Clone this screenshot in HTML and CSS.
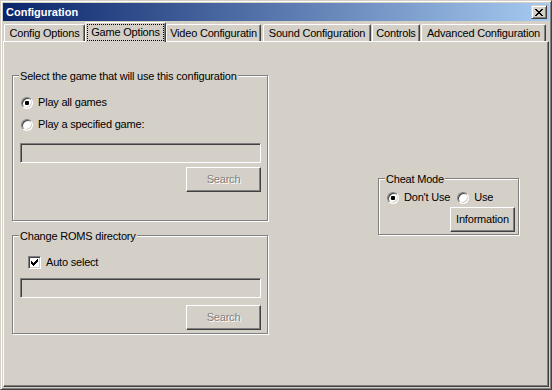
FILE: index.html
```html
<!DOCTYPE html>
<html>
  <head>
    <title>Configuration</title>
    <link rel="stylesheet" href="styles.css">
  </head>
  <body>
    <div class="window">
      <div class="titlebar">
        <span class="title">Configuration</span>
        <div class="close-btn">
          <svg width="8" height="7" viewBox="0 0 8 7" shape-rendering="crispEdges">
            <path d="M0 0h2v1H0z M6 0h2v1H6z M1 1h2v1H1z M5 1h2v1H5z M2 2h4v1H2z M3 3h2v1H3z M2 4h4v1H2z M1 5h2v1H1z M5 5h2v1H5z M0 6h2v1H0z M6 6h2v1H6z" fill="#000"/>
          </svg>
        </div>
      </div>
      <div class="tabs">
        <div class="tab tab-config">Config Options</div>
        <div class="tab tab-game active"><span class="focus">Game Options</span></div>
        <div class="tab tab-video">Video Configuratin</div>
        <div class="tab tab-sound">Sound Configuration</div>
        <div class="tab tab-controls">Controls</div>
        <div class="tab tab-advanced">Advanced Configuration</div>
      </div>
      <div class="panel">
        <div class="left-col">
          <div class="group game-group">
            <div class="legend">Select the game that will use this configuration</div>
            <div class="option opt-all"><span class="radio checked"></span>Play all games</div>
            <div class="option opt-one"><span class="radio"></span>Play a specified game:</div>
            <div class="textbox game-path"></div>
            <div class="button disabled search">Search</div>
          </div>
          <div class="group roms-group">
            <div class="legend">Change ROMS directory</div>
            <div class="option check-row">
              <span class="checkbox">
                <svg width="7" height="7" viewBox="0 0 7 7" shape-rendering="crispEdges">
                  <path d="M6 0h1v1H6z M5 1h2v1H5z M0 2h1v1H0z M4 2h3v1H4z M0 3h2v1H0z M3 3h3v1H3z M0 4h5v1H0z M1 5h3v1H1z M2 6h1v1H2z" fill="#000"/>
                </svg>
              </span>Auto select
            </div>
            <div class="textbox roms-path"></div>
            <div class="button disabled search">Search</div>
          </div>
        </div>
        <div class="group cheat-group">
          <div class="legend">Cheat Mode</div>
          <div class="cheat-options">
            <div class="option"><span class="radio checked"></span>Don't Use</div>
            <div class="option opt-use"><span class="radio"></span>Use</div>
          </div>
          <div class="button info">Information</div>
        </div>
      </div>
    </div>
  </body>
</html>
```

FILE: styles.css
```css
* {
  box-sizing: border-box;
}
body {
  margin: 0;
  background: #d4d0c8;
  font-family: "Liberation Sans", Arial, sans-serif;
  font-size: 11px;
  line-height: 13px;
  letter-spacing: -0.2px;
  color: #000;
}

/* window frame */
.window {
  width: 552px;
  height: 390px;
  padding: 2px;
  background: #d4d0c8;
  border: 1px solid;
  border-color: #d4d0c8 #404040 #404040 #d4d0c8;
  box-shadow: inset 1px 1px 0 #fff, inset -1px -1px 0 #808080;
  display: flex;
  flex-direction: column;
}
.titlebar {
  height: 18px;
  margin-bottom: 1px;
  padding: 1px 2px 0 3px;
  display: flex;
  align-items: flex-start;
  background: linear-gradient(to right, #0a246a, #a6caf0);
}
.title {
  flex: 1;
  color: #fff;
  font-weight: bold;
  line-height: 17px;
  letter-spacing: 0;
}
.close-btn {
  width: 16px;
  height: 14px;
  margin-top: 1px;
  padding: 3px 0 0 3px;
  background: #d4d0c8;
  border: 1px solid;
  border-color: #d4d0c8 #404040 #404040 #d4d0c8;
  box-shadow: inset 1px 1px 0 #fff, inset -1px -1px 0 #808080;
}
.close-btn svg {
  display: block;
}

/* tab strip */
.tabs {
  height: 19px;
  padding-left: 1px;
  display: flex;
  align-items: flex-end;
  position: relative;
  z-index: 1;
}
.tab {
  height: 17px;
  padding-top: 2px;
  text-align: center;
  white-space: nowrap;
  background: #d4d0c8;
  border-top: 1px solid #fff;
  border-left: 1px solid #fff;
  border-right: 1px solid #404040;
  border-radius: 2px 2px 0 0;
  box-shadow: inset -1px 0 0 #808080;
}
.tab.active {
  height: 20px;
  margin-bottom: -1px;
  padding: 1px 1px 0 1px;
}
.focus {
  display: block;
  height: 17px;
  padding-top: 1px;
  border: 1px dotted #000;
}
.tab-config { width: 81px; }
.tab-game { width: 81px; }
.tab-video { width: 95px; margin-right: 2px; }
.tab-sound { width: 108px; margin-right: 1px; }
.tab-controls { width: 48px; margin-right: 1px; }
.tab-advanced { width: 125px; }

/* page body */
.panel {
  flex: 1;
  padding: 33px 0 0 8px;
  display: flex;
  align-items: flex-start;
  border: 1px solid;
  border-color: #fff #404040 #404040 #fff;
  box-shadow: inset -1px -1px 0 #808080;
}
.left-col {
  width: 256px;
  display: flex;
  flex-direction: column;
}
.group {
  display: flex;
  flex-direction: column;
  border: 1px solid #808080;
  box-shadow: 1px 1px 0 #fff, inset 1px 1px 0 #fff;
}
.legend {
  align-self: flex-start;
  margin: -6px 0 0 6px;
  padding: 0 1px;
  height: 13px;
  background: #d4d0c8;
  white-space: nowrap;
}
.game-group {
  height: 146px;
}
.roms-group {
  height: 99px;
  margin-top: 14px;
}
.cheat-group {
  width: 141px;
  height: 57px;
  margin: 103px 0 0 110px;
}

.option {
  height: 13px;
  display: flex;
  align-items: center;
  white-space: nowrap;
}
.opt-all { margin: 13px 0 0 8px; }
.opt-one { margin: 9px 0 0 8px; }
.check-row { margin: 13px 0 0 15px; }
.cheat-options {
  display: flex;
  margin: 5px 0 0 8px;
}
.opt-use { margin-left: 7px; }

.radio {
  flex: none;
  width: 12px;
  height: 12px;
  margin-right: 5px;
  position: relative;
  border-radius: 50%;
  background: #fff;
  border: 1px solid;
  border-color: #808080 #fff #fff #808080;
  box-shadow: inset 1px 1px 0 #404040, inset -1px -1px 0 #d4d0c8;
}
.radio.checked::after {
  content: "";
  position: absolute;
  left: 3px;
  top: 3px;
  width: 4px;
  height: 4px;
  border-radius: 1px;
  background: #000;
}
.checkbox {
  flex: none;
  width: 13px;
  height: 13px;
  margin-right: 5px;
  padding: 2px;
  background: #fff;
  border: 1px solid;
  border-color: #808080 #fff #fff #808080;
  box-shadow: inset 1px 1px 0 #404040, inset -1px -1px 0 #d4d0c8;
}
.checkbox svg {
  display: block;
}

.textbox {
  width: 241px;
  height: 20px;
  margin-left: 7px;
  background: #d4d0c8;
  border: 1px solid;
  border-color: #808080 #fff #fff #808080;
  box-shadow: inset 1px 1px 0 #404040, inset -1px -1px 0 #d4d0c8;
}
.game-path { margin-top: 12px; }
.roms-path { margin-top: 9px; }

.button {
  height: 25px;
  display: flex;
  align-items: center;
  justify-content: center;
  align-self: flex-end;
  background: #d4d0c8;
  border: 1px solid;
  border-color: #fff #404040 #404040 #fff;
  box-shadow: inset -1px -1px 0 #808080;
}
.button.disabled {
  color: #808080;
  text-shadow: 1px 1px 0 #fff;
}
.search {
  width: 75px;
  margin-right: 6px;
}
.game-group .search { margin-top: 4px; }
.roms-group .search { margin-top: 7px; }
.info {
  width: 65px;
  margin: 3px 3px 0 0;
}
```
